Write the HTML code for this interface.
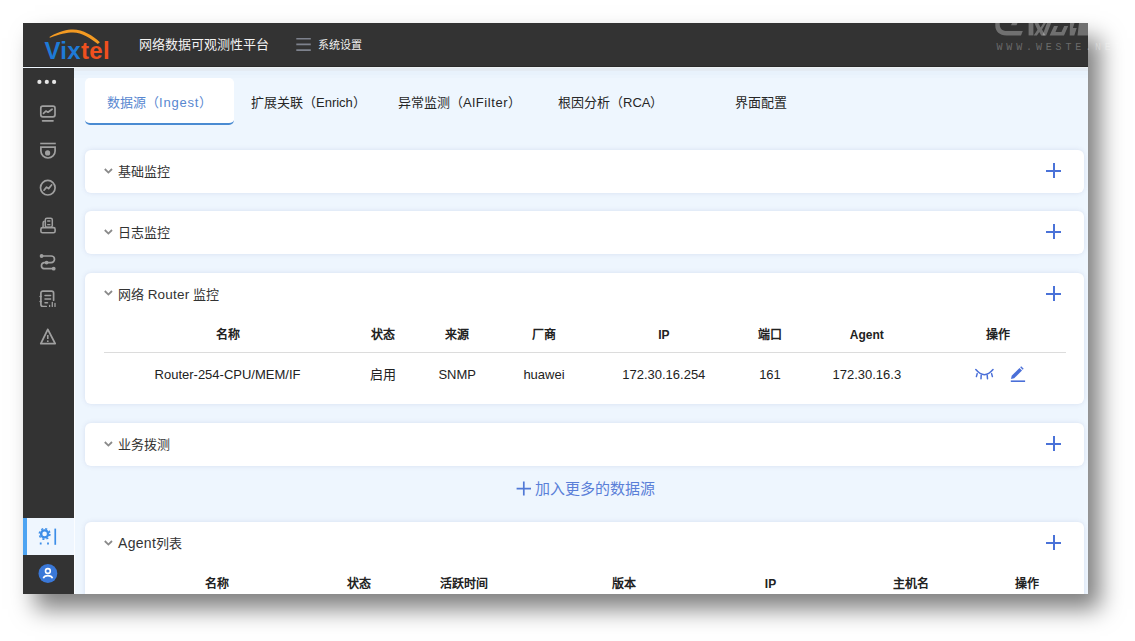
<!DOCTYPE html>
<html lang="zh-CN"><head><meta charset="utf-8">
<style>
*{box-sizing:border-box;margin:0;padding:0}
html,body{width:1135px;height:641px;overflow:hidden;background:#fff;font-family:"Liberation Sans",sans-serif}
.abs{position:absolute}
#win{position:absolute;left:23px;top:23px;width:1065px;height:571px;background:#eef6fe;box-shadow:12px 15px 22px rgba(0,0,0,0.5);overflow:hidden}
#hdr{position:absolute;left:0;top:0;width:1065px;height:44px;background:#333333;border-bottom:1px solid #2a2a2a}
#side{position:absolute;left:0;top:45px;width:51px;height:526px;background:#333333}
.panel{position:absolute;left:62px;width:999px;background:#fff;border-radius:6px;box-shadow:0 0 5px rgba(70,80,150,0.13)}
.ptitle{position:absolute;left:33px;font-size:13px;line-height:16px;color:#333;white-space:nowrap}
.chev{position:absolute;left:19px;width:10px;height:7px}
.plus{position:absolute;left:961px;width:16px;height:16px}
.plus:before{content:"";position:absolute;left:0;top:7px;width:15px;height:2px;background:#4a72d8}
.plus:after{content:"";position:absolute;left:7px;top:0;width:2px;height:15px;background:#4a72d8}
.th{position:absolute;width:200px;margin-left:-100px;text-align:center;font-size:12px;line-height:14px;font-weight:bold;color:#222;white-space:nowrap}
.td{position:absolute;width:200px;margin-left:-100px;text-align:center;font-size:13px;line-height:16px;color:#222;white-space:nowrap}
.tab{position:absolute;top:71px;font-size:13px;line-height:18px;color:#262626;white-space:nowrap}
.sico{position:absolute;left:16px;width:18px;height:18px}
</style></head><body>
<div id="win">
  <div id="hdr">
    <svg class="abs" style="left:20px;top:4px" width="70" height="38" viewBox="0 0 70 38">
      <path d="M6.4 10C17 4 24 2.6 30 2.6C40 2.8 50 8.5 56.9 15.3L54.8 17C48 11.5 39 5.6 30 5.4C24 5.4 16 7 7 10.8z" fill="#f39a22"/>
    </svg>
    <div class="abs" style="left:21.5px;top:13.5px;font-size:24px;font-weight:bold;letter-spacing:0.3px;line-height:28px"><span style="color:#1e7ad6">Vix</span><span style="color:#f0501e">tel</span></div>
    <div class="abs" style="left:116px;top:13px;font-size:13px;color:#f2f2f2;line-height:18px">网络数据可观测性平台</div>
    <svg class="abs" style="left:272px;top:13px" width="17" height="16" viewBox="0 0 17 16" stroke="#7e828d" stroke-width="1.6"><path d="M1.3 2.8H15.8M1.3 8.4H15.8M1.3 14.1H15.8"/></svg>
    <div class="abs" style="left:295px;top:15px;font-size:11px;color:#f0f0f0;line-height:14px">系统设置</div>
  </div>
  <div class="abs" style="left:51px;top:45px;width:1px;height:526px;background:#fbfdff"></div>
  <div id="side">
    <!-- dots -->
    <svg class="abs" style="left:0;top:0" width="51" height="28" viewBox="0 0 51 28" fill="#e6e6e6"><circle cx="16.4" cy="13.9" r="2.1"/><circle cx="23.8" cy="13.9" r="2.1"/><circle cx="31.1" cy="13.9" r="2.1"/></svg>
    <!-- monitor -->
    <svg class="sico" style="left:16px;top:36px" viewBox="0 0 18 18" fill="none" stroke="#a0a0a0" stroke-width="1.7" stroke-linecap="round" stroke-linejoin="round">
      <rect x="1.8" y="2.2" width="14.2" height="10.6" rx="2"/><path d="M4.5 9.4L6.9 7.1 9 8.2 13.1 5.2"/><path d="M3.6 16.8H14"/>
    </svg>
    <!-- camera dome -->
    <svg class="sico" style="left:16px;top:73px" viewBox="0 0 18 18" fill="none" stroke="#a0a0a0" stroke-width="1.7">
      <path d="M1.2 2.5H16.8" stroke-width="1.6"/><path d="M1.9 6.2H16.1V9.9A7.1 7.1 0 0 1 1.9 9.9Z"/><circle cx="8.6" cy="11.9" r="2.6" fill="#a0a0a0" stroke="none"/>
    </svg>
    <!-- circle chart -->
    <svg class="sico" style="left:16px;top:111px" viewBox="0 0 18 18" fill="none" stroke="#a0a0a0" stroke-width="1.7" stroke-linecap="round" stroke-linejoin="round">
      <circle cx="8.8" cy="8.7" r="7.3"/><path d="M5 11.2L7.6 8.1 9.6 9.6 12.6 6"/>
    </svg>
    <!-- device / tray -->
    <svg class="sico" style="left:16px;top:148px" viewBox="0 0 18 18" fill="none" stroke="#a0a0a0" stroke-width="1.5" stroke-linejoin="round">
      <rect x="6.3" y="2.2" width="7" height="9" rx="1.6"/><path d="M8.2 5h3.2M8.2 8.6h3.2" stroke-width="1.3"/><path d="M4.1 11V6.8a1.6 1.6 0 0 1 1.6-1.6"/><rect x="1.9" y="11.6" width="14.2" height="5.2" rx="1.6" stroke-width="1.6"/>
    </svg>
    <!-- route -->
    <svg class="sico" style="left:16px;top:186px" viewBox="0 0 18 18" fill="none" stroke="#a0a0a0" stroke-width="1.7" stroke-linecap="round">
      <path d="M2.6 2H12.2a3.3 3.3 0 0 1 0 6.6H5a3.1 3.1 0 0 0 0 6.1H14.7"/>
      <circle cx="2.6" cy="2" r="1.9" fill="#a0a0a0" stroke="none"/><circle cx="7.6" cy="8.6" r="1.9" fill="#a0a0a0" stroke="none"/><circle cx="14.7" cy="14.7" r="1.9" fill="#a0a0a0" stroke="none"/>
    </svg>
    <!-- doc list -->
    <svg class="sico" style="left:16px;top:221px" viewBox="0 0 18 18" fill="none" stroke="#a0a0a0" stroke-width="1.7" stroke-linecap="round">
      <path d="M14.6 11.2V4.1a2 2 0 0 0-2-2H3.9a2 2 0 0 0-2 2v11.4a2 2 0 0 0 2 2h3.3"/><path d="M1 7.5h1.2M1 12.5h1.2" stroke-width="1.3"/>
      <path d="M6 6.4h5.6M6 10h5.6M6 13.7h2.5" stroke-width="1.5"/><path d="M10.6 16.4v1M13.3 13.3v4.2M16 14.3v3.2" stroke-width="1.3"/>
    </svg>
    <!-- warning -->
    <svg class="sico" style="left:16px;top:259px" viewBox="0 0 18 18" fill="none" stroke="#a0a0a0" stroke-width="1.8" stroke-linejoin="round">
      <path d="M8.8 2.4L1.8 16.6H16.2Z"/><path d="M8.8 8.1v3.8" stroke-width="1.6"/><circle cx="8.8" cy="14.2" r="0.9" fill="#a0a0a0" stroke="none"/>
    </svg>
    <!-- active settings -->
    <div class="abs" style="left:0;top:450px;width:51px;height:37px;background:#eff6fe"></div>
    <div class="abs" style="left:0;top:450px;width:4px;height:37px;background:#4ea4f2"></div>
    <svg class="abs" style="left:0;top:450px" width="51" height="37" viewBox="0 0 51 37">
      <circle cx="21.6" cy="15.9" r="3.5" fill="none" stroke="#3d8ee8" stroke-width="2.4"/>
      <circle cx="21.6" cy="15.9" r="5.3" fill="none" stroke="#3d8ee8" stroke-width="1.5" stroke-dasharray="2.1 2.06"/>
      <rect x="16.8" y="24.5" width="1.8" height="2" fill="#3d8ee8"/><rect x="24.1" y="24.5" width="1.8" height="2" fill="#3d8ee8"/>
      <rect x="31.4" y="10.6" width="1.7" height="16.2" fill="#3d8ee8"/>
    </svg>
    <!-- avatar -->
    <svg class="abs" style="left:14px;top:494px" width="22" height="22" viewBox="0 0 22 22">
      <circle cx="10.9" cy="11.5" r="9.4" fill="#3a78d8"/>
      <circle cx="10.9" cy="9" r="2.4" fill="none" stroke="#fff" stroke-width="1.6"/>
      <path d="M6.3 16.2a4.8 3.6 0 0 1 9.2 0" fill="none" stroke="#fff" stroke-width="1.6"/>
    </svg>
  </div>
  <div class="abs" style="left:51px;top:44px;width:1014px;height:11px;background:linear-gradient(#edf2f4 0px,#edf2f4 1px,#e4ebf3 1px,#e4ebf3 4px,#e8f2fc 4px,#e8f2fc 8px,#ebf4fd 8px)"></div>
  <!-- tabs -->
  <div class="abs" style="left:62px;top:55px;width:149px;height:47px;background:#fff;border-radius:5px;border-bottom:2.5px solid #4a8bd2"></div>
  <div class="tab" style="left:84px;color:#5887d0">数据源（<span style="letter-spacing:0.8px">Ingest</span>）</div>
  <div class="tab" style="left:228px">扩展关联（Enrich）</div>
  <div class="tab" style="left:375px">异常监测（<span style="letter-spacing:0.6px">AlFilter</span>）</div>
  <div class="tab" style="left:535px">根因分析（RCA）</div>
  <div class="tab" style="left:712px">界面配置</div>

  <!-- panel 1 -->
  <div class="panel" style="top:127px;height:43px">
    <svg class="chev" style="top:17px" viewBox="0 0 10 7"><path d="M0.8 2L4.4 5.6 8 2" stroke="#8a8a8a" stroke-width="1.8" fill="none"/></svg>
    <div class="ptitle" style="top:14px">基础监控</div>
    <div class="plus" style="top:13px"></div>
  </div>
  <div class="panel" style="top:188px;height:43px">
    <svg class="chev" style="top:17px" viewBox="0 0 10 7"><path d="M0.8 2L4.4 5.6 8 2" stroke="#8a8a8a" stroke-width="1.8" fill="none"/></svg>
    <div class="ptitle" style="top:14px">日志监控</div>
    <div class="plus" style="top:13px"></div>
  </div>
  <div class="panel" style="top:250px;height:131px">
    <svg class="chev" style="top:16px" viewBox="0 0 10 7"><path d="M0.8 2L4.4 5.6 8 2" stroke="#8a8a8a" stroke-width="1.8" fill="none"/></svg>
    <div class="ptitle" style="top:14px">网络 <span style="font-size:13.5px;letter-spacing:0.2px">Router</span> 监控</div>
    <div class="plus" style="top:13px"></div>
    <div class="th" style="left:142.5px;top:55px">名称</div>
    <div class="th" style="left:298.4px;top:55px">状态</div>
    <div class="th" style="left:372.2px;top:55px">来源</div>
    <div class="th" style="left:459px;top:55px">厂商</div>
    <div class="th" style="left:578.8px;top:55px">IP</div>
    <div class="th" style="left:685px;top:55px">端口</div>
    <div class="th" style="left:781.8px;top:55px">Agent</div>
    <div class="th" style="left:913px;top:55px">操作</div>
    <div class="abs" style="left:19px;top:79px;width:962px;height:1px;background:#dcdcdc"></div>
    <div class="td" style="left:142.5px;top:94px">Router-254-CPU/MEM/IF</div>
    <div class="td" style="left:298.4px;top:94px">启用</div>
    <div class="td" style="left:372.2px;top:94px">SNMP</div>
    <div class="td" style="left:459px;top:94px">huawei</div>
    <div class="td" style="left:578.8px;top:94px">172.30.16.254</div>
    <div class="td" style="left:685px;top:94px">161</div>
    <div class="td" style="left:781.8px;top:94px">172.30.16.3</div>
    <svg class="abs" style="left:889px;top:93px" width="20" height="14" viewBox="0 0 20 14" fill="none" stroke="#4a6fd8" stroke-width="1.5" stroke-linecap="round">
      <path d="M1.8 3.6Q10.4 13.8 19 3.6"/><path d="M3.2 7.6l-0.8 3M7.2 9.2l-0.2 3.6M13.2 9.2l0.3 3.6M17.6 7.6l0.8 3"/>
    </svg>
    <svg class="abs" style="left:924px;top:92px" width="18" height="18" viewBox="0 0 18 18">
      <path d="M2 14l0.7-3.2 7.8-7.8 2.5 2.5-7.8 7.8z" fill="#4a6fd8"/><path d="M11.2 2.3l1-1 2.5 2.5-1 1z" fill="#4a6fd8"/><path d="M1.8 16.2h14.3" stroke="#4a6fd8" stroke-width="1.6"/>
    </svg>
  </div>
  <div class="panel" style="top:400px;height:43px">
    <svg class="chev" style="top:17px" viewBox="0 0 10 7"><path d="M0.8 2L4.4 5.6 8 2" stroke="#8a8a8a" stroke-width="1.8" fill="none"/></svg>
    <div class="ptitle" style="top:14px">业务拨测</div>
    <div class="plus" style="top:13px"></div>
  </div>
  <!-- add more -->
  <svg class="abs" style="left:493px;top:458px" width="16" height="16" viewBox="0 0 16 16" stroke="#5179d6" stroke-width="1.7"><path d="M0.6 7.6H15M7.8 0.6V14.6"/></svg>
  <div class="abs" style="left:512px;top:457px;font-size:15px;line-height:18px;color:#5a7fd8;white-space:nowrap">加入更多的数据源</div>
  <div class="panel" style="top:499px;height:90px">
    <svg class="chev" style="top:17px" viewBox="0 0 10 7"><path d="M0.8 2L4.4 5.6 8 2" stroke="#8a8a8a" stroke-width="1.8" fill="none"/></svg>
    <div class="ptitle" style="top:13px"><span style="font-size:14px;letter-spacing:0.3px">Agent</span>列表</div>
    <div class="plus" style="top:13px"></div>
    <div class="th" style="left:131.5px;top:55px">名称</div>
    <div class="th" style="left:274px;top:55px">状态</div>
    <div class="th" style="left:378.5px;top:55px">活跃时间</div>
    <div class="th" style="left:539px;top:55px">版本</div>
    <div class="th" style="left:685.5px;top:55px">IP</div>
    <div class="th" style="left:825.6px;top:55px">主机名</div>
    <div class="th" style="left:942.3px;top:55px">操作</div>
  </div>
</div>
<!-- watermark -->
<svg class="abs" style="left:990px;top:23px" width="98" height="14" viewBox="0 0 98 14" fill="rgba(255,255,255,0.3)">
  <path d="M5.3 0h4.4v1.2c0 4 2.4 6.8 7 6.8H32.8L31 12.4H16.5C9.5 12.4 5.3 8.6 5.3 2.5z"/>
  <path d="M22 0h5.5l-1 2.3h-5.5z"/>
  <path d="M38.6 0h4.8v12.4h-4.8z"/>
  <path d="M44.4 0h4l2.2 4.5 2.8-4.5h2.6l-4 6.5 3.4 5.9h-4.2l-1.9-3.4-2.4 3.4h-3.2l3.8-5.6z"/>
  <path d="M57 0h4.2l-5 12.4h-3.8z"/>
  <path d="M64 3h4l-2.5 6h6l2.7-6h4l-4.2 9.4H59.6z"/>
  <path d="M80 0h4.5l-1.6 5h3.8l-2.4 7.4h-4.6z"/>
  <path d="M89 0h9v12.4h-10.5z"/>
</svg>
<div class="abs" style="left:996.5px;top:42px;font-size:10px;line-height:12px;letter-spacing:3.85px;color:rgba(255,255,255,0.28);font-family:'Liberation Mono',monospace;white-space:nowrap">WWW.WESTE.NET</div>
</body></html>
